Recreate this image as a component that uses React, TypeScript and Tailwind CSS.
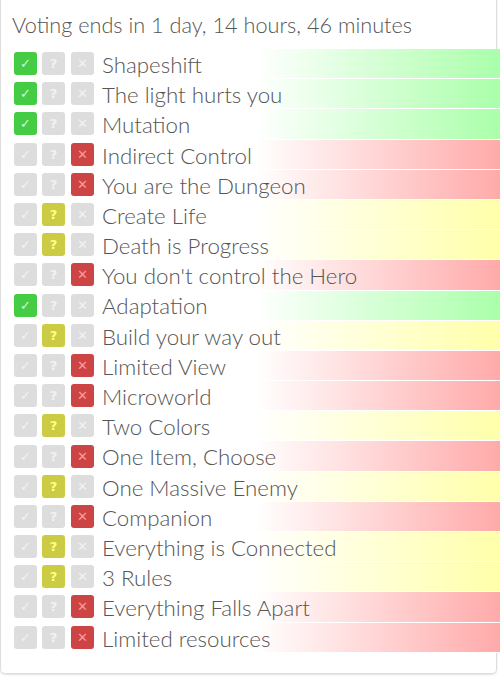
type Vote = 'yes' | 'maybe' | 'no'

const themes: { name: string; vote: Vote }[] = [
  { name: 'Shapeshift', vote: 'yes' },
  { name: 'The light hurts you', vote: 'yes' },
  { name: 'Mutation', vote: 'yes' },
  { name: 'Indirect Control', vote: 'no' },
  { name: 'You are the Dungeon', vote: 'no' },
  { name: 'Create Life', vote: 'maybe' },
  { name: 'Death is Progress', vote: 'maybe' },
  { name: "You don't control the Hero", vote: 'no' },
  { name: 'Adaptation', vote: 'yes' },
  { name: 'Build your way out', vote: 'maybe' },
  { name: 'Limited View', vote: 'no' },
  { name: 'Microworld', vote: 'no' },
  { name: 'Two Colors', vote: 'maybe' },
  { name: 'One Item, Choose', vote: 'no' },
  { name: 'One Massive Enemy', vote: 'maybe' },
  { name: 'Companion', vote: 'no' },
  { name: 'Everything is Connected', vote: 'maybe' },
  { name: '3 Rules', vote: 'maybe' },
  { name: 'Everything Falls Apart', vote: 'no' },
  { name: 'Limited resources', vote: 'no' },
]

const rowBg: Record<Vote, string> = {
  yes: 'bg-[linear-gradient(to_right,#ffffff_50%,#aaffaa)]',
  maybe: 'bg-[linear-gradient(to_right,#ffffff_50%,#ffffaa)]',
  no: 'bg-[linear-gradient(to_right,#ffffff_50%,#ffaaaa)]',
}

function VoteBox({ glyph, active, on }: { glyph: string; active: boolean; on: string }) {
  return (
    <div
      className={`w-[23px] h-[23px] rounded-[3px] flex items-center justify-center font-['DejaVu_Sans',sans-serif] font-bold text-[13px] leading-none ${
        active ? on : 'bg-[#dddddd] text-[#f2f2f2]'
      }`}
    >
      {glyph}
    </div>
  )
}

export default function App() {
  return (
    <div className="w-[500px] h-[677px] bg-white overflow-hidden font-['Lato_Light','Lato',sans-serif]">
      <div className="w-[497px] h-[674px] border-l border-r border-b border-[#dddddd] rounded-b-[5px] shadow-[0_1px_2px_rgba(0,0,0,0.12)]">
        <div className="pl-[11px] pt-[12px] h-[49px] text-[21.7px] font-light text-[#555555] leading-[26px] whitespace-nowrap">
          Voting ends in 1 day, 14 hours, 46 minutes
        </div>
        <div className="ml-[11px] mr-[-4px]">
          {themes.map(t => (
            <div
              key={t.name}
              className={`h-[30.2px] flex items-center gap-[5px] pl-[2px] border-b border-white ${rowBg[t.vote]}`}
            >
              <VoteBox glyph="✓" active={t.vote === 'yes'} on="bg-[#44cc44] text-[#d4f7d4]" />
              <VoteBox glyph="?" active={t.vote === 'maybe'} on="bg-[#cccc44] text-[#ffff88]" />
              <div className="ml-[1px]">
                <VoteBox glyph="✕" active={t.vote === 'no'} on="bg-[#cc4444] text-[#ff9a9a]" />
              </div>
              <span className="ml-[3px] pt-[3px] text-[22.3px] font-light text-[#555555] leading-none whitespace-nowrap">{t.name}</span>
            </div>
          ))}
        </div>
      </div>
    </div>
  )
}
